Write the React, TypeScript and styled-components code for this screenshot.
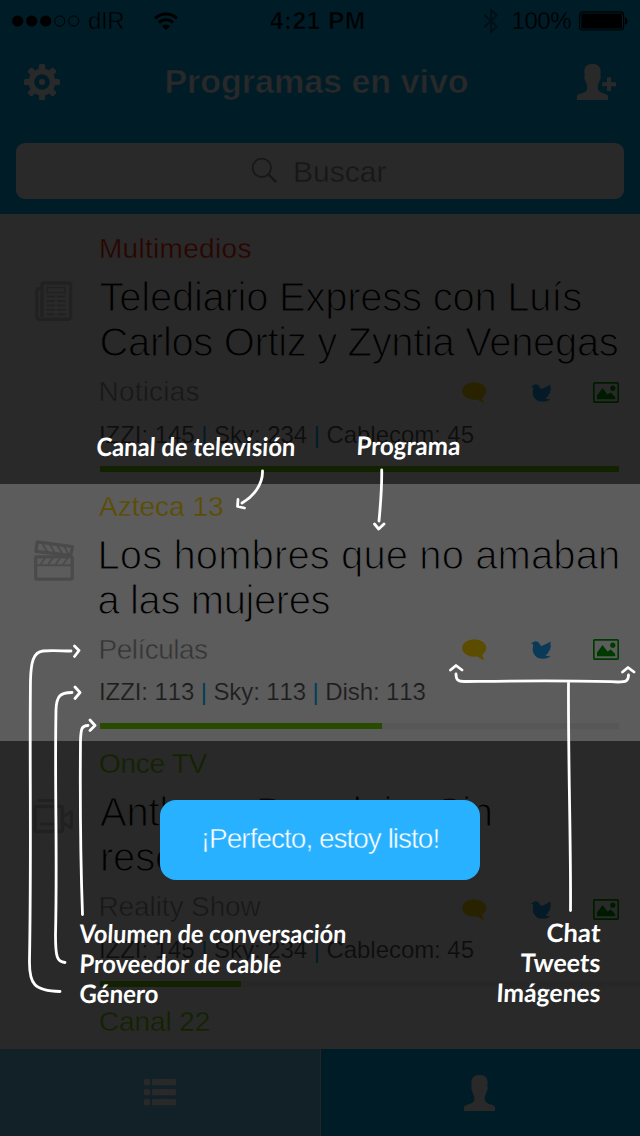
import React from "react";
import styled, { createGlobalStyle } from "styled-components";

const Global = createGlobalStyle`
  * { box-sizing: border-box; }
  body { margin: 0; background: #292929; font-family: "Liberation Sans", Arial, sans-serif; }
`;

const Screen = styled.div`
  position: relative;
  display: flex;
  flex-direction: column;
  width: 640px;
  height: 1136px;
  overflow: hidden;
  background: #fff;
`;
const Header = styled.header`
  display: flex;
  flex-direction: column;
  height: 214px;
  background: #00aeef;
`;
const StatusBar = styled.div`
  display: grid;
  grid-template-columns: 258px auto 1fr;
  align-items: center;
  height: 40px;
  padding: 2px 11px 0 12px;
  font-size: 24px;
  line-height: 28px;
  color: #000;
`;
const StatusGroup = styled.div<{ $end?: boolean }>`
  display: flex;
  align-items: center;
  justify-content: ${(p) => (p.$end ? "flex-end" : "flex-start")};
`;
const Carrier = styled.span`
  margin: 0 30px 0 8px;
  letter-spacing: -0.4px;
  -webkit-text-stroke: 0.5px #00aeef;
`;
const Clock = styled.span`
  font-weight: 700;
  letter-spacing: 0.7px;
  -webkit-text-stroke: 0.6px #00aeef;
`;
const Percent = styled.span`
  margin: 0 8px 0 13px;
  letter-spacing: -0.5px;
  -webkit-text-stroke: 0.3px #00aeef;
`;
const NavBar = styled.div`
  display: grid;
  grid-template-columns: 60px 1fr 60px;
  align-items: center;
  height: 84px;
  padding: 0 23px 0 24px;
`;
const NavTitle = styled.h1`
  margin: 0;
  padding: 0 8px 2px 0;
  text-align: center;
  font-size: 34px;
  line-height: 40px;
  color: #fff;
  -webkit-text-stroke: 0.6px #00aeef;
`;
const NavAction = styled.div<{ $end?: boolean }>`
  display: flex;
  justify-content: ${(p) => (p.$end ? "flex-end" : "flex-start")};
`;
const Search = styled.div`
  display: flex;
  align-items: center;
  gap: 16px;
  height: 56px;
  margin: 19px 16px 0;
  padding: 0 0 0 235px;
  border-radius: 9px;
  background: #fff;
  color: #8e8e93;
  font-size: 30px;
  svg { margin-top: -2px; }
  span { margin-top: 1px; -webkit-text-stroke: 0.3px #fff; }
`;

const List = styled.main`
  flex: 1;
  overflow: hidden;
  padding-top: 12px;
`;
const Row = styled.section<{ $h: number }>`
  display: grid;
  grid-template-columns: 100px 1fr;
  height: ${(p) => p.$h}px;
`;
const Genre = styled.div`
  display: flex;
  align-items: flex-start;
  padding: 55px 0 0 33px;
`;
const Body = styled.div`
  display: flex;
  flex-direction: column;
`;
const Channel = styled.div<{ $color: string; $ls: number }>`
  height: 44px;
  padding-top: 7px;
  margin-left: -1px;
  font-size: 28px;
  line-height: 32px;
  letter-spacing: ${(p) => p.$ls}px;
  color: ${(p) => p.$color};
  -webkit-text-stroke: 0.3px #fff;
`;
const Title = styled.h2<{ $indent: number }>`
  margin: 5px 0 0 ${(p) => p.$indent}px;
  font-weight: 400;
  font-size: 40px;
  color: #000;
  -webkit-text-stroke: 1.1px #fff;
`;
const TitleLine = styled.span<{ $ls: number }>`
  display: block;
  height: 45px;
  line-height: 45px;
  white-space: nowrap;
  letter-spacing: ${(p) => p.$ls}px;
`;
const Meta = styled.div<{ $h: number }>`
  display: flex;
  height: ${(p) => p.$h}px;
  margin-top: 11px;
  padding-right: 21px;
  justify-content: space-between;
  align-items: flex-start;
`;
const Category = styled.span<{ $ls: number }>`
  margin-left: -1.5px;
  font-size: 28px;
  line-height: 32px;
  letter-spacing: ${(p) => p.$ls}px;
  color: #8e8e8e;
  -webkit-text-stroke: 0.5px #fff;
`;
const Actions = styled.div<{ $drop: number }>`
  display: flex;
  align-items: center;
  margin-top: ${(p) => p.$drop}px;
`;
const Providers = styled.div<{ $ls: number }>`
  height: 46px;
  margin-left: -1px;
  font-size: 24px;
  line-height: 30px;
  font-kerning: none;
  letter-spacing: ${(p) => p.$ls}px;
  white-space: nowrap;
  color: #505050;
  -webkit-text-stroke: 0.2px #fff;
  i { font-style: normal; color: #00aeef; -webkit-text-stroke: 0; }
`;
const Track = styled.div<{ $bleed?: boolean }>`
  height: 6px;
  margin-right: ${(p) => (p.$bleed ? 0 : 21)}px;
  background: #f0f0f0;
`;
const Fill = styled.div<{ $w: number }>`
  width: ${(p) => p.$w}px;
  height: 6px;
  background: #72d000;
`;

const Tabs = styled.nav`
  display: grid;
  grid-template-columns: 320px 1fr;
  gap: 1px;
  height: 87px;
  background: #ddd;
`;
const Tab = styled.div<{ $active?: boolean }>`
  display: flex;
  justify-content: center;
  align-items: center;
  padding-right: ${(p) => (p.$active ? 0 : 2)}px;
  background: ${(p) => (p.$active ? "#6fcff5" : "#00aeef")};
`;

const Scrim = styled.div`
  position: absolute;
  inset: 0;
  display: grid;
  grid-template-rows: 484px 257px 1fr;
`;
const Shade = styled.div<{ $a: number }>`
  background: rgba(0, 0, 0, ${(p) => p.$a});
`;
const Notes = styled.svg`
  position: absolute;
  inset: 0;
`;
const Confirm = styled.button`
  position: absolute;
  left: 160px;
  top: 800px;
  width: 320px;
  height: 80px;
  border: 0;
  border-radius: 16px;
  padding: 0 0 2px;
  background: #27b1ff;
  color: #fff;
  font-family: inherit;
  font-size: 28px;
  letter-spacing: -1px;
  -webkit-text-stroke: 0.5px #27b1ff;
`;

const Gear = () => (
  <svg width="36" height="36" viewBox="-18 -18 36 36">
    {[0, 45, 90, 135, 180, 225, 270, 315].map((a) => (
      <rect key={a} x="-3.1" y="-18" width="6.2" height="8" rx="1.6" fill="#fff" transform={`rotate(${a})`} />
    ))}
    <circle r="10.6" fill="none" stroke="#fff" strokeWidth="5.6" />
    <circle r="3" fill="#fff" />
  </svg>
);
const PERSON =
  "M15.5 0C20.6 0 24 2.6 23.6 8.2L23.3 11.5C24 12.5 23.6 15.6 22.6 16.6C22.3 18.6 21.6 19.8 20.8 20.8V25C21 27.2 24 28.6 27 29.6C29.6 30.4 31 31 31 32.4V36H0V32.4C0 31 1.4 30.4 4 29.6C7 28.6 10 27.2 10.2 25V20.8C9.4 19.8 8.7 18.6 8.4 16.6C7.4 15.6 7 12.5 7.7 11.5L7.4 8.2C7 2.6 10.4 0 15.5 0Z";
const Person = ({ plus }: { plus?: boolean }) => (
  <svg width={plus ? 40 : 31} height="36" viewBox={plus ? "0 0 40 36" : "0 0 31 36"} fill="#fff">
    <path d={PERSON} />
    {plus && <path d="M30 13.5h4v4.7H39v4h-5V27h-4v-4.8h-4.8v-4H30z" />}
  </svg>
);
const Wifi = () => (
  <svg width="24" height="19" viewBox="0 0 24 19" fill="none" stroke="#000" strokeWidth="3">
    <path d="M1 6.3a16 16 0 0 1 22 0M5 10.6a10.3 10.3 0 0 1 14 0" />
    <path d="M12 18l-4-4a5.8 5.8 0 0 1 8 0z" fill="#000" stroke="none" />
  </svg>
);
const Bluetooth = () => (
  <svg width="16" height="26" viewBox="0 0 16 26" fill="none" stroke="#000" strokeOpacity=".45" strokeWidth="1.8">
    <path d="M1.5 7L14 18.5 8 24V2l6 5.2L1.5 19" />
  </svg>
);
const Battery = () => (
  <svg width="50" height="20" viewBox="0 0 50 20">
    <rect x=".6" y=".8" width="44" height="18.2" rx="3" fill="none" stroke="#000" strokeWidth="1.2" />
    <rect x="2.3" y="2.4" width="40.6" height="15" rx="1.2" />
    <path d="M46 6.4c3.4.6 3.4 6.6 0 7.2z" />
  </svg>
);
const SignalDots = () => (
  <svg width="68" height="12" viewBox="0 0 68 12">
    {[0, 1, 2, 3, 4].map((i) => (
      <circle key={i} cx={5.7 + i * 14} cy="6" r={i < 3 ? 5.6 : 5.1} fill={i < 3 ? "#000" : "none"} stroke="#000" strokeWidth={i < 3 ? 0 : 1} />
    ))}
  </svg>
);
const Lens = () => (
  <svg width="26" height="26" viewBox="0 0 26 26" fill="none" stroke="#8e8e93" strokeWidth="1.8">
    <circle cx="10.8" cy="10.8" r="9.2" />
    <path d="M17.2 17.2L25.2 25.2" strokeWidth="2.4" />
  </svg>
);
const Bubble = () => (
  <svg width="25" height="21" viewBox="0 0 25 21" fill="#ffd200">
    <ellipse cx="12.2" cy="9" rx="12" ry="8.8" />
    <path d="M14 16c2.5 2.5 5 4.3 8.4 4.7-1.3-1.7-2-3.5-2.2-6z" />
  </svg>
);
const Bird = () => (
  <svg width="21" height="18" viewBox="0 0 21 18" fill="#1da1f2">
    <path d="M0 2.2L2.2 1.2C3.8-.3 7 .1 8.2 2.3C8.8 3.3 9.3 4.4 10.300 4.900C12 4.500 13.500 3.900 15 3.100C16.800 2.400 18.200 1.500 19.300.6C19.700 2.100 19.700 3.300 19.300 4.300L20 4.800C19.900 6 19.500 6.700 19 7.300L19.400 8C18.900 9.200 18.300 9.900 17.500 10.400L17.600 11C16.800 12.600 15.800 13.600 14.300 14.100C15.300 15.200 17.500 15.500 19.800 15C18.300 16.800 13.500 18.200 9.500 17.600C4.500 16.600 1.400 12.500 1.700 7.500C1.800 6 2.400 5 2 3.600Z" />
  </svg>
);
const Photo = () => (
  <svg width="26" height="21" viewBox="0 0 26 21">
    <rect x=".8" y=".8" width="24.4" height="19.4" rx="1.2" fill="none" stroke="#00a000" strokeWidth="1.7" />
    <path d="M4 17.2V13.5L9.5 6L14.5 12.5L17.8 10.5L22.2 15V17.2Z" fill="#00a000" />
    <circle cx="19.8" cy="6.2" r="2.6" fill="#00a000" />
  </svg>
);
const News = () => (
  <svg width="42" height="42" viewBox="0 0 42 42" fill="none" stroke="#ccc" strokeWidth="3.4">
    <path d="M9 36V3.4Q9 2 10.5 2H36Q37.7 2 37.7 3.6V35.5Q37.7 38.2 35.5 38.2H6.5Q3.8 38.2 3.8 35.5V10Q3.8 7.5 6 7.5H8.5" />
    <rect x="14" y="6.5" width="18" height="5" strokeWidth="1.7" />
    <path d="M13.5 15.5h8.500M24 15.5h8.500M13.5 20h8.500M24 20h8.500M13.5 24.4h8.500M24 24.4h8.500M13.5 28.8h8.500M24 28.8h8.500M13.5 33.2h8.500M24 33.2h8.500" strokeWidth="1.9" />
  </svg>
);
const Clapper = () => (
  <svg width="42" height="42" viewBox="0 0 42 42" fill="none" stroke="#ccc" strokeWidth="3.2" strokeLinejoin="round">
    <rect x="2.7" y="17.8" width="36.5" height="22.3" rx="1" />
    <path d="M4.3 2.8L39.4 7.7L37.8 16.3L2.8 12.3Z" />
    <path d="M2.7 26.3h36" strokeWidth="2" />
    <path d="M7.5 25.5l5-7M15 25.5l5-7M22.5 25.5l5-7M30 25.5l5-7M9 4l5.5 9M16.5 5l5.5 9M24 6l5.5 9M31 7l5 9" strokeWidth="1.9" />
  </svg>
);
const Camera = () => (
  <svg width="42" height="42" viewBox="0 0 42 42" fill="none" stroke="#ccc" strokeWidth="3.6" strokeLinejoin="round">
    <rect x="2" y="10.5" width="27.5" height="25" rx="1.5" />
    <path d="M30.5 20.5L38.5 15.5V32L30.5 27M4.5 4.5h17M7 28h14.5" strokeWidth="3" />
  </svg>
);
const ListIcon = () => (
  <svg width="32" height="27" viewBox="0 0 32 27" fill="#fff">
    {[0, 10, 20].map((y) => (
      <g key={y}>
        <rect y={y} width="6" height="6.3" rx="1.5" />
        <rect x="8" y={y} width="24" height="6.3" rx="1.5" />
      </g>
    ))}
  </svg>
);

const BirdSlot = styled.span`
  display: flex;
  margin: 0 41px 0 44px;
`;

type Line = [string, number];
interface Program {
  h: number;
  channel: Line;
  color: string;
  icon: React.ReactNode;
  indent: number;
  title: Line[];
  category: Line;
  providers: string[];
  providerSpacing: number;
  progress: number;
  metaHeight: number;
  drop: number;
  bleed?: boolean;
}
const programs: Program[] = [
  {
    h: 258, channel: ["Multimedios", 0.3], color: "#ff1a00", icon: <News />, indent: -0.5,
    title: [["Telediario Express con Luís", -0.25], ["Carlos Ortiz y Zyntia Venegas", -0.35]],
    category: ["Noticias", 0.2], providers: ["IZZI: 145", "Sky: 234", "Cablecom: 45"], providerSpacing: -0.05,
    progress: 519, metaHeight: 44, drop: 6,
  },
  {
    h: 257, channel: ["Azteca 13", 0], color: "#ffd200", icon: <Clapper />, indent: -2.5,
    title: [["Los hombres que no amaban", 0.1], ["a las mujeres", -0.4]],
    category: ["Películas", -0.5], providers: ["IZZI: 113", "Sky: 113", "Dish: 113"], providerSpacing: -0.1,
    progress: 282, metaHeight: 43, drop: 5,
  },
  {
    h: 258, channel: ["Once TV", -0.3], color: "#72d000", icon: <Camera />, indent: 0,
    title: [["Anthony Bourdain: Sin", -0.25], ["reservas", -0.2]],
    category: ["Reality Show", -0.1], providers: ["IZZI: 145", "Sky: 234", "Cablecom: 45"], providerSpacing: -0.05,
    progress: 141, metaHeight: 44, drop: 8, bleed: true,
  },
];

const ProgramRow = ({ p }: { p: Program }) => (
  <Row $h={p.h}>
    <Genre>{p.icon}</Genre>
    <Body>
      <Channel $color={p.color} $ls={p.channel[1]}>{p.channel[0]}</Channel>
      <Title $indent={p.indent}>
        {p.title.map(([text, ls]) => (
          <TitleLine key={text} $ls={ls}>{text}</TitleLine>
        ))}
      </Title>
      <Meta $h={p.metaHeight}>
        <Category $ls={p.category[1]}>{p.category[0]}</Category>
        <Actions $drop={p.drop}>
          <Bubble />
          <BirdSlot><Bird /></BirdSlot>
          <Photo />
        </Actions>
      </Meta>
      <Providers $ls={p.providerSpacing}>
        {p.providers[0]} <i>|</i> {p.providers[1]} <i>|</i> {p.providers[2]}
      </Providers>
      <Track $bleed={p.bleed}><Fill $w={p.progress} /></Track>
    </Body>
  </Row>
);

const notes: { x: number; y: number; w: number; text: string }[] = [
  { x: 96, y: 456, w: 199, text: "Canal de televisión" },
  { x: 356, y: 455, w: 104, text: "Programa" },
  { x: 79, y: 943, w: 267, text: "Volumen de conversación" },
  { x: 79, y: 973, w: 202, text: "Proveedor de cable" },
  { x: 79, y: 1003, w: 79, text: "Género" },
  { x: 546, y: 942, w: 54, text: "Chat" },
  { x: 520, y: 972, w: 80, text: "Tweets" },
  { x: 496, y: 1002, w: 104, text: "Imágenes" },
];

const Annotations = () => (
  <Notes width="640" height="1136" viewBox="0 0 640 1136">
    <g fill="none" stroke="#fff" strokeWidth="2.8" strokeLinecap="round" strokeLinejoin="round">
      <path d="M262.5 471C263 484 254 496 242 503M238 499.5L237.5 506.5L244.5 508" />
      <path d="M381.7 470C382 488 380.5 505 379 521M374.5 524L378.7 529L384 524" />
      <path d="M71 651C62 651 52 650 43 651C33 652 31 663 30.5 680C29.5 760 31.5 850 29.5 960C29 984 34 991 60 991.5M74.5 646L79 650.5L74.5 656.5" />
      <path d="M72 692.5C60 692.5 56.5 696 56 710C54.5 790 57.5 850 55.5 935C55.5 957 57 962 65 962.5M75 687L80 692.5L75 698.5" />
      <path d="M88 725.5C82 725.5 81 728 80.5 740C80 800 80.5 860 82.5 914.5M90 720L95 725.5L90 730.5" />
      <path d="M456 674C456 680 458 681.5 464 681.5C510 681 570 680 618 682C626 682 628.5 681 628.5 675M450.5 670L456 665.5L462 670M622.5 672L628 667.5L634 672M568.5 683C568 760 571 840 570.5 910.5" />
    </g>
    <g fill="#fff" fontFamily="Lato, 'Noto Sans', sans-serif" fontSize="25.5" fontWeight="700">
      {notes.map((n) => (
        <text key={n.text} transform={`translate(${n.x} ${n.y}) skewX(-3)`} textLength={n.w} lengthAdjust="spacingAndGlyphs">
          {n.text}
        </text>
      ))}
    </g>
  </Notes>
);

export default function App() {
  return (
    <Screen>
      <Global />
      <Header>
        <StatusBar>
          <StatusGroup><SignalDots /><Carrier>dIR</Carrier><Wifi /></StatusGroup>
          <Clock>4:21 PM</Clock>
          <StatusGroup $end><Bluetooth /><Percent>100%</Percent><Battery /></StatusGroup>
        </StatusBar>
        <NavBar>
          <NavAction><Gear /></NavAction>
          <NavTitle>Programas en vivo</NavTitle>
          <NavAction $end><Person plus /></NavAction>
        </NavBar>
        <Search><Lens /><span>Buscar</span></Search>
      </Header>
      <List>
        {programs.map((p) => <ProgramRow key={p.channel[0]} p={p} />)}
        <Row $h={50}>
          <Genre />
          <Body><Channel $color="#72d000" $ls={-0.1}>Canal 22</Channel></Body>
        </Row>
      </List>
      <Tabs>
        <Tab $active><ListIcon /></Tab>
        <Tab><Person /></Tab>
      </Tabs>
      <Scrim>
        <Shade $a={0.84} />
        <Shade $a={0.64} />
        <Shade $a={0.84} />
      </Scrim>
      <Confirm>¡Perfecto, estoy listo!</Confirm>
      <Annotations />
    </Screen>
  );
}
